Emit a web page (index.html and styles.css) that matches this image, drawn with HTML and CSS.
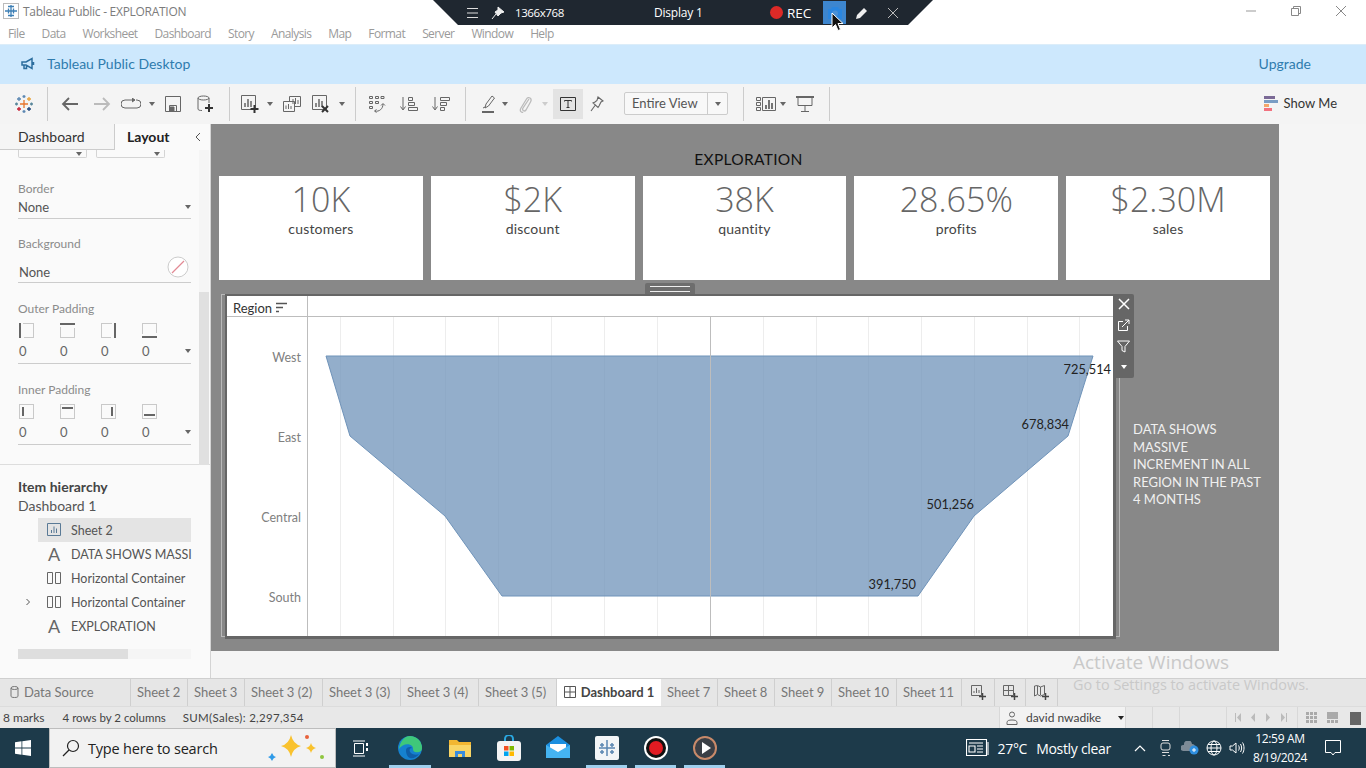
FILE: index.html
```html
<!DOCTYPE html>
<html>
<head>
  <title>Tableau Public - EXPLORATION</title>
  <link rel="stylesheet" href="styles.css">
</head>
<body>
  <div class="titlebar">
    <svg class="app-icon" width="16" height="16" viewBox="0 0 16 16"><rect x="0.5" y="0.5" width="15" height="15" fill="#fff" stroke="#bbb"/><path d="M8 2v12M2 8h12M5.500 5.500v5M3 8h5M10.500 5.500v5M8 5.500v5M5 3.500h6M5 12.500h6" stroke="#3d7fb5" stroke-width="1.300" fill="none"/></svg>
    <span class="title-text">Tableau Public - EXPLORATION</span>
    <div class="win-buttons">
      <svg width="12" height="12" viewBox="0 0 12 12"><path d="M1 6h10" stroke="#999"/></svg>
      <svg width="12" height="12" viewBox="0 0 12 12"><path d="M1.500 3.500h7v7h-7zM3.500 3.500v-2h7v7h-2" stroke="#888" fill="none"/></svg>
      <svg width="12" height="12" viewBox="0 0 12 12"><path d="M1 1l10 10M11 1L1 11" stroke="#888" fill="none"/></svg>
    </div>
  </div>

  <div class="menubar">
    <span>File</span><span>Data</span><span>Worksheet</span><span>Dashboard</span><span>Story</span><span>Analysis</span><span>Map</span><span>Format</span><span>Server</span><span>Window</span><span>Help</span>
  </div>

  <div class="banner">
    <svg width="14" height="14" viewBox="0 0 14 14"><path d="M1 5h4l6-3.500v10L5 8H1zM3 8v3.500h2.500V8M12.500 5v3" fill="none" stroke="#2c6e9e" stroke-width="1.500"/></svg>
    <span class="banner-text">Tableau Public Desktop</span>
    <span class="upgrade">Upgrade</span>
  </div>

  <div class="toolbar">
    <div class="tb w47">
      <svg width="18" height="18" viewBox="0 0 18 18" fill="none" stroke-width="1.300"><path d="M9 5v8M5 9h8" stroke="#e8762c"/><path d="M4 2v4M2 4h4" stroke="#5b87b2"/><path d="M14 2v4M12 4h4" stroke="#e8a33c"/><path d="M4 12v4M2 14h4" stroke="#c72035"/><path d="M14 12v4M12 14h4" stroke="#1f447a"/><path d="M9 0v3M7.500 1.500h3M9 15v3M7.500 16.500h3" stroke="#5b87b2"/><path d="M0 9h3M1.500 7.500v3M15 9h3M16.500 7.500v3" stroke="#59879b"/></svg>
    </div>
    <div class="sep"></div>
    <div class="group pl6 pr5">
      <div class="tb w32"><svg width="18" height="14" viewBox="0 0 18 14" fill="none" stroke="#666" stroke-width="1.800"><path d="M17 7H2M8 1L2 7l6 6"/></svg></div>
      <div class="tb w32"><svg width="18" height="14" viewBox="0 0 18 14" fill="none" stroke="#bbb" stroke-width="1.800"><path d="M1 7h15M10 1l6 6-6 6"/></svg></div>
      <div class="tb w26"><svg width="20" height="12" viewBox="0 0 20 12" fill="none" stroke="#666"><path d="M11 2H4a3.500 3.500 0 0 0 0 8h12a3.500 3.500 0 0 0 0-8h-1"/><path d="M11 0l3 2-3 2" fill="#666"/></svg></div>
      <div class="tb w16"><i class="caret"></i></div>
      <div class="tb w26"><svg width="16" height="16" viewBox="0 0 16 16" fill="none" stroke="#666"><path d="M.5.5h15v15H.500z"/><path d="M4.500 15V9.500h7V15" /><path d="M5 11h4v4H5z" fill="#666"/></svg></div>
      <div class="tb w38"><svg width="16" height="18" viewBox="0 0 16 18" fill="none" stroke="#666"><ellipse cx="6.500" cy="3" rx="5.500" ry="2"/><path d="M1 3v11c0 1 1.500 1.500 4 1.500M12 3v5"/><path d="M12 9v8M8 13h8" stroke="#333" stroke-width="2"/></svg></div>
    </div>
    <div class="sep"></div>
    <div class="group pl4 pr3">
      <div class="tb w32"><svg width="18" height="18" viewBox="0 0 18 18" fill="none" stroke="#666"><path d="M.5.5h14v14H.500z"/><path d="M4 12V8M7 12V4M10 12V6" stroke-width="1.500"/><path d="M13.500 10v8M9.500 14h8" stroke="#333" stroke-width="2"/></svg></div>
      <div class="tb w8"><i class="caret"></i></div>
      <div class="tb w36"><svg width="18" height="16" viewBox="0 0 18 16" fill="none" stroke="#666"><path d="M6.500.5h11v10h-11z"/><path d="M.5 5.500h11v10H.500z" fill="#f4f4f4"/><path d="M10 8V3M12.500 8V2M15 8V4M3 13V9.500M5.500 13V8M8 13v-3"/></svg></div>
      <div class="tb w22"><svg width="18" height="18" viewBox="0 0 18 18" fill="none" stroke="#666"><path d="M.5.5h14v14H.500z"/><path d="M4 12V8M7 12V4M10 12V6" stroke-width="1.500"/><path d="M10 11l6 6M16 11l-6 6" stroke="#333" stroke-width="2"/></svg></div>
      <div class="tb w20"><i class="caret"></i></div>
    </div>
    <div class="sep"></div>
    <div class="group pl5 pr8">
      <div class="tb w32"><svg width="18" height="18" viewBox="0 0 18 18" fill="none" stroke="#666"><path d="M1.500 1.500h3v2h-3zM7.500 1.500h3v2h-3zM13 1.500h3v2h-3zM1.500 6.500h3v2h-3zM7.500 6.500h3v2h-3zM1.500 11.500h3v2h-3z"/><path d="M7 16c4 1 8-2 8-7M13 10.500l2-2 2 2M8.500 14.500L6.500 16l2 1.500"/></svg></div>
      <div class="tb w32"><svg width="18" height="16" viewBox="0 0 18 16" fill="none" stroke="#666"><path d="M3 1v12M.5 10.500L3 14l2.500-3.500"/><path d="M8.500 1.500h4v3h-4zM8.500 6.500h6v3h-6zM8.500 11.500h9v3h-9z"/></svg></div>
      <div class="tb w32"><svg width="18" height="16" viewBox="0 0 18 16" fill="none" stroke="#666"><path d="M3 1v12M.5 10.500L3 14l2.500-3.500"/><path d="M8.500 1.500h9v3h-9zM8.500 6.500h6v3h-6zM8.500 11.500h4v3h-4z"/></svg></div>
    </div>
    <div class="sep"></div>
    <div class="group pl11 pr15">
      <div class="tb w24"><svg width="14" height="18" viewBox="0 0 14 18" fill="none" stroke="#666"><path d="M3 13l1-4 6-8 2.500 2-6 8z"/><path d="M1 13l2-1"/><path d="M0 17h12" stroke-width="2"/></svg></div>
      <div class="tb w8"><i class="caret"></i></div>
      <div class="tb w32"><svg width="14" height="18" viewBox="0 0 14 18" fill="none" stroke="#bbb" stroke-width="1.300"><path d="M11 4L5 13c-1.500 2.500 1.500 4 3 2l4.500-8c2-3.500-2-6-4-3L3 13c-2 3.500 1 5 2 4"/></svg></div>
      <div class="tb w8"><i class="caret light"></i></div>
      <div class="w4"></div>
      <div class="tb w30 active"><svg width="16" height="14" viewBox="0 0 16 14" fill="none" stroke="#333"><path d="M.5.500h15v13H.500z"/><path d="M4.500 4.500v-1h7v1M8 3.500v7M6.500 10.500h3"/></svg></div>
      <div class="tb w28"><svg width="14" height="16" viewBox="0 0 14 16" fill="none" stroke="#666" stroke-width="1.100"><path d="M8 1l5 4-2 1-2 4-1 1.500L3 7l2-1 2-1.500zM5 9.500L1 15"/></svg></div>
      <div class="fit-box"><span class="fit-label">Entire View</span><span class="fit-arrow"><i class="caret"></i></span></div>
    </div>
    <div class="sep"></div>
    <div class="group pl10 pr7">
      <div class="tb w24"><svg width="20" height="14" viewBox="0 0 20 14" fill="none" stroke="#666"><path d="M.5 .5h4v3h-4zM.5 5.500h4v3h-4zM.5 10.500h4v3h-4zM6.500.5h13v13h-13z"/><path d="M10 12V8M13 12V3M16 12V6" stroke-width="1.800"/></svg></div>
      <div class="tb w10"><i class="caret"></i></div>
      <div class="tb w34"><svg width="18" height="16" viewBox="0 0 18 16" fill="none" stroke="#666"><path d="M0 1h18" stroke-width="2"/><path d="M2 1.500v8h14v-8M9 9.500v5.500M5 15.500h8"/></svg></div>
    </div>
    <div class="sep"></div>
    <div class="showme">
      <svg width="14" height="15" viewBox="0 0 14 15"><rect width="11" height="3" fill="#7b6a96"/><rect y="4" width="14" height="3" fill="#7a9dc4"/><rect y="8" width="5" height="3" fill="#f2a66b"/><rect y="12" width="8" height="3" fill="#f2727f"/></svg>
      <span>Show Me</span>
    </div>
  </div>

  <div class="main">
    <div class="sidepanel">
      <div class="panel-tabs">
        <div class="panel-tab">Dashboard</div>
        <div class="panel-tab selected">Layout</div>
        <svg class="collapse" width="8" height="10" viewBox="0 0 8 10"><path d="M6 1L2 5l4 4" fill="none" stroke="#555"/></svg>
      </div>
      <div class="panel-scroll">
        <div class="panel-body">
          <div class="cut-row"><div class="cut-box"><i class="caret"></i></div><div class="cut-box"><i class="caret"></i></div></div>
          <div class="prop prop-border">
            <div class="prop-label">Border</div>
            <div class="prop-value"><span>None</span><i class="caret"></i></div>
          </div>
          <div class="prop prop-bg">
            <div class="prop-label">Background</div>
            <div class="prop-value bg-value"><span>None</span>
              <svg width="22" height="22" viewBox="0 0 22 22"><circle cx="11" cy="11" r="10" fill="#fff" stroke="#ccc"/><path d="M5 17L17 5" stroke="#e28a94" stroke-width="1.300"/></svg>
            </div>
          </div>
          <div class="prop prop-pad">
            <div class="prop-label">Outer Padding</div>
            <div class="pad-icons">
              <svg width="15" height="15" viewBox="0 0 15 15" fill="none"><path d="M4.500.5h10v14h-10" stroke="#999" stroke-dasharray="1 1"/><path d="M1 0v15" stroke="#666" stroke-width="2"/></svg>
              <svg width="15" height="15" viewBox="0 0 15 15" fill="none"><path d="M.5 4.500v10h14v-10" stroke="#999" stroke-dasharray="1 1"/><path d="M0 1h15" stroke="#666" stroke-width="2"/></svg>
              <svg width="15" height="15" viewBox="0 0 15 15" fill="none"><path d="M10.500.5H.5v14h10" stroke="#999" stroke-dasharray="1 1"/><path d="M14 0v15" stroke="#666" stroke-width="2"/></svg>
              <svg width="15" height="15" viewBox="0 0 15 15" fill="none"><path d="M.5 10.500V.5h14v10" stroke="#999" stroke-dasharray="1 1"/><path d="M0 14h15" stroke="#666" stroke-width="2"/></svg>
            </div>
            <div class="pad-values"><span>0</span><span>0</span><span>0</span><span>0</span><i class="caret"></i></div>
          </div>
          <div class="prop prop-pad">
            <div class="prop-label">Inner Padding</div>
            <div class="pad-icons">
              <svg width="15" height="15" viewBox="0 0 15 15" fill="none"><path d="M.5.5h14v14H.500z" stroke="#999" stroke-dasharray="1 1"/><path d="M4 3v9" stroke="#666" stroke-width="2"/></svg>
              <svg width="15" height="15" viewBox="0 0 15 15" fill="none"><path d="M.5.5h14v14H.500z" stroke="#999" stroke-dasharray="1 1"/><path d="M2 4h11" stroke="#666" stroke-width="2"/></svg>
              <svg width="15" height="15" viewBox="0 0 15 15" fill="none"><path d="M.5.5h14v14H.500z" stroke="#999" stroke-dasharray="1 1"/><path d="M11 3v9" stroke="#666" stroke-width="2"/></svg>
              <svg width="15" height="15" viewBox="0 0 15 15" fill="none"><path d="M.5.5h14v14H.500z" stroke="#999" stroke-dasharray="1 1"/><path d="M2 11h11" stroke="#666" stroke-width="2"/></svg>
            </div>
            <div class="pad-values"><span>0</span><span>0</span><span>0</span><span>0</span><i class="caret"></i></div>
          </div>
        </div>
        <div class="vscroll"><div class="vthumb"></div></div>
      </div>
      <div class="hierarchy">
        <div class="h-title">Item hierarchy</div>
        <div class="h-sub">Dashboard 1</div>
        <div class="h-row current">
          <svg width="14" height="14" viewBox="0 0 14 14" fill="none" stroke="#5a7a96"><path d="M.5.5h13v12H.500z"/><path d="M4.500 10V7M7 10V3.500M9.500 10V5.500"/></svg>
          <span class="h-text">Sheet 2</span>
        </div>
        <div class="h-row">
          <b class="h-a">A</b>
          <span class="h-text">DATA SHOWS MASSI</span>
        </div>
        <div class="h-row">
          <svg width="14" height="14" viewBox="0 0 14 14" fill="none" stroke="#666"><path d="M.5 1.500h5v11h-5zM8.500 1.500h5v11h-5z"/></svg>
          <span class="h-text">Horizontal Container</span>
        </div>
        <div class="h-row">
          <svg class="h-chev" width="6" height="8" viewBox="0 0 6 8"><path d="M1.500 1l3 3-3 3" fill="none" stroke="#555"/></svg>
          <svg width="14" height="14" viewBox="0 0 14 14" fill="none" stroke="#666"><path d="M.5 1.500h5v11h-5zM8.500 1.500h5v11h-5z"/></svg>
          <span class="h-text">Horizontal Container</span>
        </div>
        <div class="h-row">
          <b class="h-a">A</b>
          <span class="h-text">EXPLORATION</span>
        </div>
        <div class="hscroll"><div class="hthumb"></div></div>
      </div>
    </div>

    <div class="canvas">
      <div class="dash">
        <div class="dash-title">EXPLORATION</div>
        <div class="kpis">
          <div class="kpi"><div class="kpi-num">10K</div><div class="kpi-name">customers</div></div>
          <div class="kpi"><div class="kpi-num">$2K</div><div class="kpi-name">discount</div></div>
          <div class="kpi"><div class="kpi-num">38K</div><div class="kpi-name">quantity</div></div>
          <div class="kpi"><div class="kpi-num">28.65%</div><div class="kpi-name">profits</div></div>
          <div class="kpi"><div class="kpi-num">$2.30M</div><div class="kpi-name">sales</div></div>
        </div>
        <div class="lower">
          <div class="handle"></div>
          <div class="frame">
            <div class="chart">
              <svg width="886" height="341" viewBox="227 296 886 341">
                <g stroke="#ededed">
                  <path d="M340.500 317v320M393.500 317v320M445.500 317v320M498.500 317v320M551.500 317v320M604.500 317v320M657.500 317v320M763.500 317v320M816.500 317v320M868.500 317v320M921.500 317v320M974.500 317v320M1027.500 317v320M1079.500 317v320"/>
                </g>
                <polygon points="326,356 1093,356 1068,436 974,516 918,596 502,596 445,516 350,436" fill="#6f93b9" fill-opacity="0.75" stroke="#6f93b9"/>
                <path d="M227 316.500h886M307.500 296v341M710.500 317v320" stroke="#bdbdbd" fill="none"/>
                <text class="axis-head" x="233" y="313">Region</text>
                <path d="M276 303.500h11M276 307.500h7M276 311.500h3" stroke="#555" stroke-width="1.500"/>
                <g class="axis-label">
                  <text x="301" y="362">West</text>
                  <text x="301" y="442">East</text>
                  <text x="301" y="522">Central</text>
                  <text x="301" y="602">South</text>
                </g>
                <g class="mark-label">
                  <text x="1111" y="374">725,514</text>
                  <text x="1069" y="429">678,834</text>
                  <text x="974" y="509">501,256</text>
                  <text x="916" y="589">391,750</text>
                </g>
              </svg>
            </div>
          </div>
          <div class="chart-tools">
            <svg width="12" height="12" viewBox="0 0 12 12"><path d="M1 1l10 10M11 1L1 11" stroke="#fff" stroke-width="1.500"/></svg>
            <svg width="13" height="13" viewBox="0 0 13 13" fill="none" stroke="#fff"><path d="M6 2.500H1.500v9h9V7M5 8l7-7M8 1h4v4"/></svg>
            <svg width="13" height="13" viewBox="0 0 13 13" fill="none" stroke="#fff"><path d="M.5 1h12L8 6.500V12L5 10.500v-4z"/></svg>
            <i class="caret white"></i>
          </div>
          <div class="note">DATA SHOWS<br>MASSIVE<br>INCREMENT IN ALL<br>REGION IN THE PAST<br>4 MONTHS</div>
        </div>
      </div>
    </div>
  </div>

  <div class="tabs">
    <div class="tab ds">
      <svg width="9" height="12" viewBox="0 0 9 12" fill="none" stroke="#777"><ellipse cx="4.500" cy="2" rx="3.500" ry="1.500"/><path d="M1 2v8c0 1 1 1.500 3.500 1.500S8 11 8 10V2"/></svg>
      <span>Data Source</span>
    </div>
    <div class="tab t57">Sheet 2</div>
    <div class="tab t57">Sheet 3</div>
    <div class="tab t78">Sheet 3 (2)</div>
    <div class="tab t78">Sheet 3 (3)</div>
    <div class="tab t78">Sheet 3 (4)</div>
    <div class="tab t78">Sheet 3 (5)</div>
    <div class="tab current">
      <svg width="12" height="12" viewBox="0 0 12 12" fill="none" stroke="#555"><path d="M.5.5h11v11H.500zM6 .5v11M.5 6h11"/></svg>
      <span>Dashboard 1</span>
    </div>
    <div class="tab t57">Sheet 7</div>
    <div class="tab t57">Sheet 8</div>
    <div class="tab t57">Sheet 9</div>
    <div class="tab t65">Sheet 10</div>
    <div class="tab t65">Sheet 11</div>
    <div class="tab ticon t33"><svg width="15" height="15" viewBox="0 0 15 15" fill="none" stroke="#666"><path d="M.5.5h10v10H.500z"/><path d="M3 8V6M5.500 8V3M8 8V5"/><path d="M11.500 8v7M8 11.500h7" stroke="#444" stroke-width="1.500"/></svg></div>
    <div class="tab ticon t31"><svg width="15" height="15" viewBox="0 0 15 15" fill="none" stroke="#666"><path d="M.5.5h10v10H.500zM5.500.5v10M.5 5.500h10"/><path d="M11.500 8v7M8 11.500h7" stroke="#444" stroke-width="1.500"/></svg></div>
    <div class="tab ticon t32"><svg width="15" height="15" viewBox="0 0 15 15" fill="none" stroke="#666"><path d="M.5 1v10l3-1.500 3 1.500 4-1.500V.500l-4 1.500-3-1.500zM3.500 1v8M6.500 2v8"/><path d="M11.500 8v7M8 11.500h7" stroke="#444" stroke-width="1.500"/></svg></div>
  </div>

  <div class="statusbar">
    <span class="st1">8 marks</span>
    <span class="st2">4 rows by 2 columns</span>
    <span class="st3">SUM(Sales): 2,297,354</span>
    <div class="user">
      <svg width="12" height="14" viewBox="0 0 12 14" fill="none" stroke="#666"><circle cx="6" cy="3.500" r="2.500"/><path d="M1 13.500v-2c0-2 2-2.500 5-2.500s5 .5 5 2.500v2z"/></svg>
      <span>david nwadike</span>
      <i class="caret dark"></i>
    </div>
    <div class="st-cell w27"></div>
    <div class="st-cell w27"></div>
    <div class="st-cell w47"></div>
    <div class="st-pager">
      <svg width="66" height="9" viewBox="0 0 66 9" fill="#bbb"><path d="M0 0h1v9H0zM6 0v9L2 4.500zM20 0v9l-4-4.500zM31 0v9l4-4.500zM46 0v9l4-4.500zM51 0h1v9h-1z"/></svg>
    </div>
    <div class="st-views">
      <svg width="56" height="14" viewBox="0 0 56 14"><path d="M0 0h3v3H0zM4 0h3v3H4zM8 0h3v3H8zM0 4h3v3H0zM4 4h3v3H4zM8 4h3v3H8zM0 8h3v3H0zM4 8h3v3H4zM8 8h3v3H8z" fill="#aaa" transform="translate(0 1)"/><path d="M21 1h11v7H21zM21 9h3v3h-3zM25 9h3v3h-3zM29 9h3v3h-3z" fill="#aaa"/><rect x="44" y="1" width="11" height="13" fill="#666"/></svg>
    </div>
  </div>

  <div class="taskbar">
    <div class="start">
      <svg width="16" height="16" viewBox="0 0 16 16" fill="#fff"><path d="M0 2.200l6.500-.9v6.300H0zM7.300 1.200L16 0v7.600H7.300zM0 8.400h6.500v6.300L0 13.800zM7.300 8.400H16V16l-8.700-1.200z"/></svg>
    </div>
    <div class="search">
      <svg width="18" height="18" viewBox="0 0 18 18" fill="none" stroke="#222" stroke-width="1.200"><circle cx="11" cy="7" r="5.500"/><path d="M7 11l-6 6"/></svg>
      <span class="search-text">Type here to search</span>
      <svg class="sparkle" width="60" height="30" viewBox="0 0 60 30"><path d="M24 2q2 9 10 11q-8 2-10 11q-2-9-10-11q8-2 10-11z" fill="#f9c22e"/><path d="M44 10q1 4 5 5q-4 1-5 5q-1-4-5-5q4-1 5-5z" fill="#f9c22e"/><path d="M5 20q1 3 4 4q-3 1-4 4q-1-3-4-4q3-1 4-4z" fill="#2f9be8"/><circle cx="40" cy="4" r="2" fill="#e8623c"/><circle cx="55" cy="24" r="2" fill="#8fc63f"/></svg>
    </div>
    <div class="task w50 first"><svg width="17" height="17" viewBox="0 0 17 17" fill="none" stroke="#fff"><path d="M2.500 3.500h9v10h-9zM1 1h12M1 16h12"/><path d="M14 3h2v3h-2zM14 8h2v3h-2z" fill="#fff" stroke="none"/></svg></div>
    <div class="task w50 open">
      <svg width="26" height="26" viewBox="0 0 26 26"><circle cx="13" cy="13" r="12" fill="#1581cf"/><path d="M13 1a12 12 0 0 1 12 12c0 4-4 5-7 4-3-1-1-4-3-6-3-3-10-2-13 3C3 7 7 1 13 1z" fill="#3fc77a"/><path d="M9 15c0-3 5-4 6-2-3 0-3 3-1 5 2 2 6 2 8 1-2 3-6 5-9 4-3-1-4-5-4-8z" fill="#0f5ea8"/></svg>
    </div>
    <div class="task w49">
      <svg width="22" height="20" viewBox="0 0 22 20"><path d="M0 2h8l2 2h12v14H0z" fill="#f2b632"/><path d="M0 7h22v12H0z" fill="#f9d566"/><path d="M6 13h10v6h-3v-3H9v3H6z" fill="#3a8dde"/></svg>
    </div>
    <div class="task w49">
      <svg width="24" height="26" viewBox="0 0 24 26"><path d="M8 6V4a4 4 0 0 1 8 0v2" fill="none" stroke="#2aa7e0" stroke-width="2"/><rect y="6" width="24" height="20" rx="3" fill="#f4f4f4"/><rect x="7" y="11" width="4.500" height="4.500" fill="#f25022"/><rect x="12.500" y="11" width="4.500" height="4.500" fill="#7fba00"/><rect x="7" y="16.500" width="4.500" height="4.500" fill="#00a4ef"/><rect x="12.500" y="16.500" width="4.500" height="4.500" fill="#ffb900"/></svg>
    </div>
    <div class="task w49">
      <svg width="24" height="24" viewBox="0 0 24 24"><path d="M0 9L12 0l12 9v13H0z" fill="#1b8fe0"/><path d="M4 8h16v7l-8 4-8-4z" fill="#fff"/><path d="M0 9l12 7 12-7v13H0z" fill="#45b4f2"/></svg>
    </div>
    <div class="task w49 open">
      <svg width="24" height="24" viewBox="0 0 24 24" fill="none"><rect width="24" height="24" rx="2" fill="#f2f5f7"/><path d="M12 4v16M4 12h16M7 7v4M5 9h4M17 7v4M15 9h4M7 14v4M5 16h4M17 14v4M15 16h4" stroke="#5b87b2" stroke-width="1.500"/></svg>
    </div>
    <div class="task w49 open">
      <svg width="24" height="24" viewBox="0 0 24 24"><circle cx="12" cy="12" r="12" fill="#fff"/><circle cx="12" cy="12" r="10" fill="#111"/><circle cx="12" cy="12" r="7" fill="#e11b22"/></svg>
    </div>
    <div class="task w49 open">
      <svg width="24" height="24" viewBox="0 0 24 24"><circle cx="12" cy="12" r="11" fill="#3a3f46" stroke="#c88a6a" stroke-width="2"/><path d="M9 6l9 6-9 6z" fill="#fff"/></svg>
    </div>
    <div class="tray">
      <svg class="news" width="24" height="18" viewBox="0 0 24 18" fill="none" stroke="#fff" stroke-width="1.100"><path d="M.5.500h20v16H.500zM22 3v13"/><path d="M3 4h14M3 7h6v6H3zM11 7h6M11 10h6M11 13h6"/></svg>
      <span class="weather">27°C</span>
      <span class="weather clear">Mostly clear</span>
      <svg class="ti-chev" width="12" height="7" viewBox="0 0 12 7"><path d="M1 6l5-5 5 5" fill="none" stroke="#fff" stroke-width="1.200"/></svg>
      <svg class="ti-mic" width="11" height="18" viewBox="0 0 11 18" fill="none" stroke="#ddd"><path d="M2 1.500h7M2 13.500h7M5.500 16.500h-3M10 16.500H8"/><rect x="1" y="4" width="9" height="7" rx="2"/></svg>
      <svg class="ti-cloud" width="18" height="14" viewBox="0 0 18 14"><path d="M2 10a3 3 0 0 1 1-6 4 4 0 0 1 8-1 3 3 0 0 1 3 3v4z" fill="#7d8b97"/><circle cx="13" cy="9" r="4.500" fill="#2f8fe0"/><path d="M11 9h4M13 7v4" stroke="#fff"/></svg>
      <svg class="ti-globe" width="16" height="16" viewBox="0 0 16 16" fill="none" stroke="#fff"><circle cx="8" cy="8" r="7"/><ellipse cx="8" cy="8" rx="3" ry="7"/><path d="M1 8h14M2 4.500h12M2 11.500h12"/></svg>
      <svg class="ti-sound" width="16" height="14" viewBox="0 0 16 14" fill="none" stroke="#fff"><path d="M1 5h2.500L7 2v10L3.500 9H1zM9.500 4.500c1 1.500 1 3.500 0 5M11.500 3c1.500 2.500 1.500 5.500 0 8M13.500 1.500c2 3 2 8 0 11"/></svg>
      <div class="clock"><div>12:59 AM</div><div>8/19/2024</div></div>
      <svg class="notify" width="16" height="16" viewBox="0 0 16 16" fill="none" stroke="#fff"><path d="M.5.500h15v12H10L8 15l-2-2.500H.5z"/></svg>
    </div>
  </div>

  <div class="recorder">
    <svg class="rec-menu" width="14" height="12" viewBox="0 0 14 12"><path d="M1 1.500h11M1 6h11M1 10.500h11" stroke="#ddd"/></svg>
    <svg class="rec-pin" width="14" height="14" viewBox="0 0 14 14"><path d="M7 1l6 5-3 1-3 3-3-4 3-2zM5 8l-4 5" fill="#eee" stroke="#eee"/></svg>
    <span class="rec-size">1366x768</span>
    <span class="rec-display">Display 1</span>
    <span class="rec-dot"></span>
    <span class="rec-label">REC</span>
    <span class="rec-cam"><svg width="16" height="14" viewBox="0 0 16 14"><path d="M1 3h3l1-2h6l1 2h3v10H1z" fill="#2a86e0"/><circle cx="8" cy="7.500" r="3" fill="#4a90d6"/></svg></span>
    <svg class="rec-pen" width="14" height="14" viewBox="0 0 14 14"><path d="M1 13l1-4 7-7 3 3-7 7z" fill="#eee"/></svg>
    <svg class="rec-close" width="12" height="12" viewBox="0 0 12 12"><path d="M1 1l10 10M11 1L1 11" stroke="#bbb"/></svg>
  </div>
  <svg class="cursor" width="13" height="20" viewBox="0 0 13 20"><path d="M1 1v15l3.500-3.500 2.500 6 2.500-1-2.500-6h5z" fill="#111" stroke="#fff"/></svg>

  <div class="activate">
    <div class="act-big">Activate Windows</div>
    <div class="act-small">Go to Settings to activate Windows.</div>
  </div>
</body>
</html>
```

FILE: styles.css
```css
* {
  box-sizing: border-box;
}

html, body {
  margin: 0;
  padding: 0;
}

body {
  position: relative;
  width: 1366px;
  height: 768px;
  overflow: hidden;
  display: flex;
  flex-direction: column;
  font-family: "Lato", "Open Sans", sans-serif;
  font-size: 13px;
  color: #444;
  background: #fff;
}

svg {
  display: block;
  flex: none;
}

.caret {
  display: block;
  flex: none;
  width: 0;
  height: 0;
  border-left: 3.5px solid transparent;
  border-right: 3.5px solid transparent;
  border-top: 4px solid #666;
}

.caret.light { border-top-color: #ccc; }
.caret.white { border-top-color: #fff; }
.caret.dark { border-top-color: #222; }

/* window chrome */
.titlebar {
  height: 22px;
  flex: none;
  display: flex;
  align-items: center;
  padding-left: 3px;
}

.title-text {
  margin-left: 4px;
  font-family: "Open Sans", sans-serif;
  font-size: 12px;
  color: #7c7c7c;
  letter-spacing: -0.28px;
}

.win-buttons {
  margin-left: auto;
  display: flex;
  gap: 33px;
  padding-right: 19px;
}

.menubar {
  height: 22px;
  flex: none;
  display: flex;
  align-items: center;
  gap: 17px;
  padding-left: 8px;
  font-family: "Open Sans", sans-serif;
  font-size: 12px;
  letter-spacing: -0.6px;
  color: #9a9a9a;
}

.banner {
  height: 40px;
  flex: none;
  display: flex;
  align-items: center;
  padding: 0 55px 2px 21px;
  background: #cde8fd;
  border-top: 1px solid #dcedf9;
  color: #2f7cae;
}

.banner-text {
  margin-left: 12px;
  font-size: 14px;
}

.upgrade {
  margin-left: auto;
  margin-bottom: 1px;
  font-size: 14px;
}

/* toolbar */
.toolbar {
  height: 40px;
  flex: none;
  display: flex;
  align-items: center;
  background: #f4f4f4;
}

.group {
  display: flex;
  align-items: center;
  height: 100%;
}

.pl4 { padding-left: 4px; }
.pl5 { padding-left: 5px; }
.pl6 { padding-left: 6px; }
.pl10 { padding-left: 10px; }
.pl11 { padding-left: 11px; }
.pr3 { padding-right: 3px; }
.pr5 { padding-right: 5px; }
.pr7 { padding-right: 7px; }
.pr8 { padding-right: 8px; }
.pr15 { padding-right: 15px; }

.sep {
  width: 1px;
  height: 34px;
  background: #ccc;
  flex: none;
}

.tb {
  height: 30px;
  display: flex;
  align-items: center;
  justify-content: center;
  flex: none;
}

.w4 { width: 4px; flex: none; }
.w8 { width: 8px; }
.w10 { width: 10px; }
.w16 { width: 16px; }
.w20 { width: 20px; }
.w22 { width: 22px; }
.w24 { width: 24px; }
.w26 { width: 26px; }
.w28 { width: 28px; }
.w30 { width: 30px; }
.w32 { width: 32px; }
.w34 { width: 34px; }
.w36 { width: 36px; }
.w38 { width: 38px; }
.w47 { width: 47px; }

.active { background: #e3e3e3; }

.fit-box {
  width: 104px;
  height: 23px;
  margin: -1px 0 0 13px;
  display: flex;
  border: 1px solid #ccc;
  border-radius: 2px;
  background: #f8f8f8;
}

.fit-label {
  flex: 1;
  padding-left: 7px;
  line-height: 20px;
  font-size: 13px;
  color: #555;
}

.fit-arrow {
  width: 20px;
  display: flex;
  align-items: center;
  justify-content: center;
  border-left: 1px solid #ccc;
}

.showme {
  margin-left: auto;
  margin-bottom: 2px;
  padding-right: 29px;
  display: flex;
  align-items: center;
  gap: 6px;
  font-size: 13px;
  color: #333;
}

/* main area */
.main {
  flex: 1;
  display: flex;
  min-height: 0;
}

.sidepanel {
  width: 211px;
  flex: none;
  display: flex;
  flex-direction: column;
  background: #fafafa;
  border-right: 1px solid #d4d4d4;
}

.panel-tabs {
  height: 26px;
  flex: none;
  display: flex;
  align-items: center;
  background: #fafafa;
}

.panel-tab {
  width: 115px;
  height: 26px;
  line-height: 26px;
  padding-left: 18px;
  font-size: 14px;
  color: #333;
  background: #f5f5f5;
  border-right: 1px solid #ccc;
  border-bottom: 1px solid #ccc;
}

.panel-tab.selected {
  width: 70px;
  padding-left: 12px;
  font-weight: 700;
  color: #222;
  background: #fafafa;
  border: 0;
}

.collapse { margin-left: 9px; }

.panel-scroll {
  height: 315px;
  flex: none;
  display: flex;
  border-bottom: 1px solid #ddd;
}

.panel-body {
  width: 199px;
  flex: none;
  padding-left: 18px;
}

.vscroll {
  width: 10px;
  flex: none;
  background: #f5f5f5;
  padding-top: 142px;
}

.vthumb {
  height: 173px;
  background: #e0e0e0;
}

.cut-row {
  display: flex;
  gap: 9px;
  height: 8px;
}

.cut-box {
  width: 69px;
  height: 8px;
  display: flex;
  justify-content: flex-end;
  align-items: flex-start;
  padding: 2px 4px 0 0;
  border: 1px solid #d4d4d4;
  border-top: 0;
  border-radius: 0 0 2px 2px;
}

.prop {
  width: 173px;
  border-bottom: 1px solid #ccc;
}

.prop-label {
  font-size: 12px;
  line-height: 14px;
  color: #8b8b8b;
}

.prop-value {
  display: flex;
  align-items: center;
  justify-content: space-between;
  font-size: 13px;
  color: #555;
}

.prop-border {
  margin-top: 24px;
  height: 37px;
}

.prop-border .prop-value {
  margin-top: 3px;
  height: 16px;
}

.prop-bg {
  margin-top: 18px;
  height: 46px;
}

.bg-value {
  height: 24px;
  margin-top: 4px;
  padding: 0 2px 0 1px;
}

.bg-value span {
  padding-top: 10px;
}

.prop-pad {
  margin-top: 19px;
  height: 62px;
}

.pad-icons {
  display: flex;
  gap: 26px;
  margin-top: 7px;
  padding-left: 1px;
}

.pad-values {
  display: flex;
  align-items: center;
  margin-top: 5px;
  height: 16px;
  font-size: 13px;
  color: #666;
}

.pad-values span {
  width: 41px;
  padding-left: 1px;
}

.pad-values .caret {
  margin-left: auto;
}

.hierarchy {
  flex: 1;
  padding: 14px 19px 0 18px;
}

.h-title {
  font-weight: 700;
  font-size: 14px;
  line-height: 16px;
  color: #444;
}

.h-sub {
  margin-top: 3px;
  font-size: 14px;
  line-height: 16px;
  color: #555;
}

.h-row {
  position: relative;
  height: 24px;
  margin-left: 20px;
  padding-left: 9px;
  display: flex;
  align-items: center;
  gap: 10px;
  font-size: 12.5px;
  color: #555;
  white-space: nowrap;
}

.h-row:nth-child(3) { margin-top: 4px; }

.h-row.current { background: #e4e4e4; }

.h-a {
  width: 14px;
  flex: none;
  text-align: center;
  font-size: 18px;
  font-weight: 400;
  color: #666;
}

.h-chev {
  position: absolute;
  left: -13px;
  top: 8px;
}

.hscroll {
  height: 10px;
  margin-top: 11px;
  background: #f5f5f5;
}

.hthumb {
  width: 110px;
  height: 10px;
  background: #dedede;
}

/* dashboard */
.canvas {
  flex: 1;
  background: #f5f5f5;
}

.dash {
  width: 1068px;
  height: 527px;
  padding: 0 9px 0 8px;
  background: #888;
}

.dash-title {
  height: 52px;
  padding: 26px 0 0 8px;
  text-align: center;
  font-size: 15.5px;
  letter-spacing: 0.3px;
  line-height: 18px;
  color: #111;
}

.kpis {
  display: flex;
  gap: 8px;
}

.kpi {
  flex: 1;
  height: 104px;
  background: #fff;
  text-align: center;
}

.kpi-num {
  margin-top: 4px;
  font-family: "Open Sans", sans-serif;
  font-size: 34px;
  line-height: 38px;
  font-weight: 300;
  color: #666;
}

.kpi-name {
  margin-top: 2px;
  font-size: 14px;
  letter-spacing: 0.2px;
  line-height: 18px;
  color: #444;
}

.lower {
  position: relative;
  display: flex;
  margin-top: 14px;
}

.handle {
  position: absolute;
  left: 426px;
  top: -11px;
  width: 50px;
  height: 11px;
  background: #6d6d6d;
  border-radius: 2px 2px 0 0;
}

.handle::after {
  content: "";
  position: absolute;
  left: 5px;
  right: 5px;
  top: 3px;
  height: 4px;
  border-top: 1px solid #eee;
  border-bottom: 1px solid #eee;
}

.frame {
  width: 899px;
  height: 343px;
  margin-left: 2px;
  padding: 0 3px 0 5px;
  border: 1px solid #b9b9b9;
}

.chart {
  width: 891px;
  height: 345px;
  margin: -1px 0 0 -2px;
  border: solid #666;
  border-width: 2px 3px 3px 2px;
  background: #fff;
  overflow: hidden;
}

.axis-head {
  font-size: 13px;
  fill: #333;
  font-family: "Lato", sans-serif;
}

.axis-label text {
  font-size: 12.5px;
  fill: #808080;
  text-anchor: end;
}

.mark-label text {
  font-size: 12.8px;
  fill: #222;
  text-anchor: end;
}

.chart-tools {
  position: absolute;
  left: 894px;
  top: 0;
  width: 21px;
  height: 84px;
  background: #666;
  border-radius: 0 2px 2px 0;
  display: flex;
  flex-direction: column;
  align-items: center;
  gap: 8.5px;
  padding-top: 4px;
}

.chart-tools .caret {
  margin-top: 3px;
}

.note {
  width: 135px;
  margin: 127px 0 0 13px;
  font-size: 13px;
  line-height: 17.6px;
  color: #f0f0f0;
  white-space: nowrap;
}

/* sheet tabs */
.tabs {
  height: 28px;
  flex: none;
  display: flex;
  background: #e6e6e6;
  border-top: 1px solid #cfcfcf;
  font-size: 13px;
  color: #777;
}

.tab {
  flex: none;
  display: flex;
  align-items: center;
  gap: 4px;
  padding: 0 0 2px 6px;
  border-right: 1px solid #cfcfcf;
  white-space: nowrap;
}

.tab.ticon {
  justify-content: center;
  padding: 0;
}

.tab.ds {
  width: 131px;
  padding-left: 10px;
  gap: 5px;
}

.tab.current {
  width: 104px;
  justify-content: center;
  padding-left: 0;
  background: #fff;
  color: #444;
  font-weight: 700;
  border-right: 0;
  gap: 5px;
}

.t57 { width: 57px; }
.t65 { width: 65px; }
.t78 { width: 78px; }
.t31 { width: 31px; }
.t32 { width: 32px; }
.t33 { width: 33px; }

/* status bar */
.statusbar {
  height: 22px;
  flex: none;
  display: flex;
  align-items: center;
  background: #e8e8e8;
  border-top: 1px solid #dcdcdc;
  font-size: 12px;
  color: #444;
}

.st1 { margin-left: 3px; }
.st2 { margin-left: 18px; font-size: 11.5px; }
.st3 { margin-left: 17px; font-size: 11.5px; letter-spacing: 0.3px; }

.user {
  margin-left: auto;
  width: 127px;
  height: 100%;
  display: flex;
  align-items: center;
  gap: 8px;
  padding-left: 6px;
  background: #f2f2f2;
  border-left: 1px solid #d8d8d8;
  border-right: 1px solid #d8d8d8;
}

.user .caret {
  margin-left: 9px;
}

.st-cell {
  height: 100%;
  border-right: 1px solid #d8d8d8;
  flex: none;
}

.w27 { width: 27px; }

.st-pager {
  width: 71px;
  height: 100%;
  padding-left: 8px;
  display: flex;
  align-items: center;
  border-right: 1px solid #d8d8d8;
}

.st-views {
  width: 68px;
  padding-left: 8px;
}

/* taskbar */
.taskbar {
  height: 40px;
  flex: none;
  display: flex;
  align-items: center;
  background: #1d3a4a;
  color: #fff;
}

.start {
  width: 49px;
  height: 40px;
  display: flex;
  align-items: center;
  justify-content: center;
  padding-right: 4px;
}

.search {
  width: 287px;
  height: 40px;
  display: flex;
  align-items: center;
  padding-left: 12px;
  background: #f2f2f2;
  border: 1px solid #bdbdbd;
  color: #222;
}

.search-text {
  margin-left: 8px;
  font-family: "Open Sans", sans-serif;
  font-size: 14.5px;
  letter-spacing: -0.2px;
}

.sparkle {
  margin-left: auto;
  margin-right: 8px;
}

.task {
  height: 40px;
  display: flex;
  align-items: center;
  justify-content: center;
  flex: none;
}

.task.w50 { width: 50px; }
.task.w49 { width: 49px; }
.task.first { margin-left: -1px; }

.task.open {
  border-bottom: 3px solid #9fd0ee;
  border-image: linear-gradient(to right, transparent 10%, #9fd0ee 10%, #9fd0ee 90%, transparent 90%) 1;
  padding-top: 3px;
}

.tray {
  margin-left: auto;
  display: flex;
  align-items: center;
  height: 100%;
  font-family: "Open Sans", sans-serif;
}

.news { margin-right: 8px; }

.weather {
  font-size: 14px;
  letter-spacing: -0.3px;
}

.clear { margin-left: 9px; }

.ti-chev { margin-left: 23px; }
.ti-mic { margin-left: 13.5px; }
.ti-cloud { margin-left: 10.5px; }
.ti-globe { margin-left: 7px; }
.ti-sound { margin-left: 7px; }

.clock {
  width: 66px;
  margin-left: 2px;
  text-align: center;
  font-size: 12px;
  line-height: 19px;
  letter-spacing: -0.3px;
}

.notify {
  margin: 0 25px 0 12px;
}

/* recorder overlay */
.recorder {
  position: absolute;
  left: 433px;
  top: 0;
  width: 500px;
  height: 25px;
  background: #1f2730;
  clip-path: polygon(0 0, 100% 0, 475px 100%, 25px 100%);
  display: flex;
  align-items: center;
  color: #fff;
  font-family: "Open Sans", sans-serif;
  font-size: 12px;
}

.rec-menu { margin-left: 33px; }
.rec-pin { margin-left: 11px; }

.rec-size {
  width: 49px;
  margin-left: 10px;
  font-size: 11.5px;
  letter-spacing: -0.4px;
  white-space: nowrap;
}

.rec-display {
  width: 48px;
  margin-left: 90px;
  letter-spacing: -0.2px;
  white-space: nowrap;
}

.rec-dot {
  width: 13px;
  height: 13px;
  margin-left: 68px;
  border-radius: 50%;
  background: #dd2a27;
}

.rec-label {
  width: 26px;
  margin-left: 4px;
  font-size: 13.5px;
}

.rec-cam {
  width: 23px;
  height: 23px;
  margin-left: 10px;
  display: flex;
  align-items: center;
  justify-content: center;
  background: #3d86cf;
}

.rec-pen { margin-left: 9px; }
.rec-close { margin-left: 18px; }

.cursor {
  position: absolute;
  left: 831px;
  top: 12px;
}

.activate {
  position: absolute;
  left: 1073px;
  top: 651px;
  color: #c9c9c9;
  font-family: "Open Sans", sans-serif;
  white-space: nowrap;
}

.act-big {
  font-size: 19px;
  line-height: 23px;
}

.act-small {
  margin-top: 1px;
  font-size: 14.4px;
  line-height: 20px;
}
```
